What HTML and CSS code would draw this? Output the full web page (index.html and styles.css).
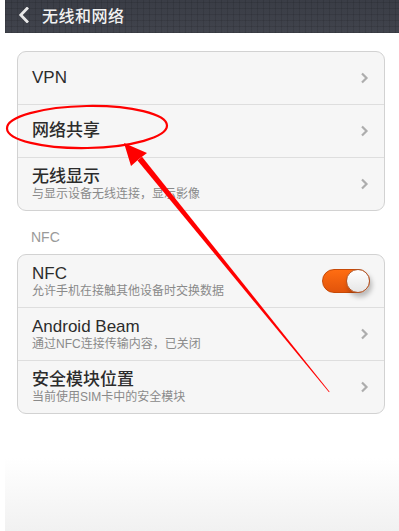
FILE: index.html
```html
<!DOCTYPE html>
<html lang="zh">
<head>
<meta charset="utf-8">
<title>无线和网络</title>
<link rel="stylesheet" href="styles.css">
</head>
<body>
<div class="screen">
  <header class="topbar">
    <svg class="back" width="11" height="16" viewBox="0 0 11 16"><path d="M9 1.5 L2.8 8 L9 14.5" fill="none" stroke="#e8e8e8" stroke-width="2.8" stroke-linecap="square"/></svg>
    <h1 class="topbar-title">无线和网络</h1>
  </header>

  <main class="content">
    <section class="card">
      <div class="row">
        <div class="row-text"><div class="row-title">VPN</div></div>
        <svg class="chev" width="9" height="12" viewBox="0 0 9 12"><path d="M2 1.5 L6.5 6 L2 10.5" fill="none" stroke="#adadad" stroke-width="2.2"/></svg>
      </div>
      <div class="row">
        <div class="row-text"><div class="row-title">网络共享</div></div>
        <svg class="chev" width="9" height="12" viewBox="0 0 9 12"><path d="M2 1.5 L6.5 6 L2 10.5" fill="none" stroke="#adadad" stroke-width="2.2"/></svg>
      </div>
      <div class="row">
        <div class="row-text">
          <div class="row-title">无线显示</div>
          <div class="row-sub">与显示设备无线连接，显示影像</div>
        </div>
        <svg class="chev" width="9" height="12" viewBox="0 0 9 12"><path d="M2 1.5 L6.5 6 L2 10.5" fill="none" stroke="#adadad" stroke-width="2.2"/></svg>
      </div>
    </section>

    <div class="section-label">NFC</div>

    <section class="card">
      <div class="row">
        <div class="row-text">
          <div class="row-title">NFC</div>
          <div class="row-sub">允许手机在接触其他设备时交换数据</div>
        </div>
        <div class="toggle"><span class="knob"></span></div>
      </div>
      <div class="row">
        <div class="row-text">
          <div class="row-title">Android Beam</div>
          <div class="row-sub">通过NFC连接传输内容，已关闭</div>
        </div>
        <svg class="chev" width="9" height="12" viewBox="0 0 9 12"><path d="M2 1.5 L6.5 6 L2 10.5" fill="none" stroke="#adadad" stroke-width="2.2"/></svg>
      </div>
      <div class="row">
        <div class="row-text">
          <div class="row-title">安全模块位置</div>
          <div class="row-sub">当前使用SIM卡中的安全模块</div>
        </div>
        <svg class="chev" width="9" height="12" viewBox="0 0 9 12"><path d="M2 1.5 L6.5 6 L2 10.5" fill="none" stroke="#adadad" stroke-width="2.2"/></svg>
      </div>
    </section>
  </main>

  <svg class="annotation" width="399" height="531" viewBox="0 0 399 531">
    <ellipse cx="87" cy="127" rx="80" ry="21" fill="none" stroke="#ff0000" stroke-width="2.2" transform="rotate(-1 87 127)"/>
    <polygon points="124,143 147,153 139,159 131,166" fill="#ff0000"/>
    <polygon points="137.5,160.5 142,156.8 329.6,391.7 329,392.2" fill="#ff0000"/>
  </svg>
</div>
</body>
</html>
```

FILE: styles.css
```css
* { box-sizing: border-box; }
html, body { margin: 0; padding: 0; background: #ffffff; }
body { font-family: "Liberation Sans", "Noto Sans CJK SC", sans-serif; }

.screen {
  position: relative;
  width: 399px;
  height: 531px;
  overflow: hidden;
  padding-left: 5px;
  background: #ffffff;
}

.topbar {
  height: 33px;
  display: flex;
  align-items: center;
  padding-left: 13px;
  gap: 13px;
  background-color: #3d4049;
  background-image:
    repeating-linear-gradient(90deg, rgba(0,0,0,0.10) 0 1px, transparent 1px 6px),
    repeating-linear-gradient(0deg, rgba(0,0,0,0.10) 0 1px, transparent 1px 6px),
    linear-gradient(#3a3d46, #41444d);
  padding-bottom: 3px;
}
.back { display: block; }
.topbar-title {
  margin: 0;
  font-size: 16px;
  font-weight: 500;
  color: #f2f2f2;
  letter-spacing: 0.5px;
}

.content {
  height: 498px;
  padding: 18px 0 0 12px;
  background: linear-gradient(to bottom, #ffffff 0, #ffffff 425px, #f1f1f1 498px);
}

.card {
  width: 368px;
  background: #f6f6f6;
  border: 1px solid #d2d2d2;
  border-radius: 9px;
}

.row {
  height: 53px;
  display: flex;
  align-items: center;
  padding: 0 15px 0 14px;
  border-top: 1px solid #dedede;
}
.row:first-child { border-top: none; height: 52px; }

.row-text { flex: 1; min-width: 0; }
.row-title {
  font-size: 17px;
  line-height: 20px;
  font-weight: 500;
  color: #2c2c2c;
}
.row-sub {
  font-size: 12px;
  line-height: 15px;
  color: #8a8a8a;
}
.chev { display: block; flex: none; }

.section-label {
  font-size: 14px;
  color: #9a9a9a;
  padding: 18px 0 9px 14px;
  line-height: 16px;
}

.toggle {
  position: relative;
  width: 48px;
  height: 24px;
  margin-right: -1px;
  border-radius: 12px;
  background: linear-gradient(#ff6d12, #e2540b);
  border: 1px solid #c74a07;
  flex: none;
}
.knob {
  position: absolute;
  right: -1px;
  top: -1px;
  width: 24px;
  height: 24px;
  border-radius: 50%;
  background: linear-gradient(#ffffff, #e6e6e6);
  border: 1px solid #b0562a;
  box-shadow: 2px 4px 5px rgba(0,0,0,0.25);
}

.annotation {
  position: absolute;
  left: 0;
  top: 0;
  pointer-events: none;
}
```
